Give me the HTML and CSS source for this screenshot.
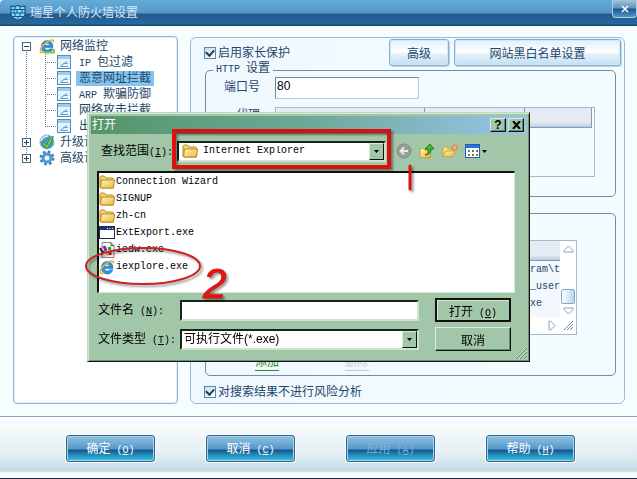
FILE: index.html
```
<!DOCTYPE html>
<html lang="zh-CN">
<head>
  <meta charset="UTF-8">
  <title>瑞星个人防火墙设置</title>
  <link rel="stylesheet" href="styles.css">
</head>
<body>
  <!-- shared icons -->
  <svg class="defs" width="0" height="0">
    <defs>
      <linearGradient id="gold" x1="0" y1="0" x2="1" y2="1">
        <stop offset="0" stop-color="#fff6b8"/>
        <stop offset="1" stop-color="#e8b83c"/>
      </linearGradient>
      <symbol id="folder" viewBox="0 0 16 16">
        <path d="M1 13V3.500q0-1.500 1.500-1.500h3L7 4h6q1.500 0 1.500 1.500V13q0 1-1 1H2q-1 0-1-1z" fill="#f3d56c" stroke="#b98a22"/>
        <path d="M1.500 13.500 2.500 6h13L14.500 14H2z" fill="url(#gold)" stroke="#b98a22" stroke-linejoin="round"/>
      </symbol>
      <symbol id="page" viewBox="0 0 14 14">
        <rect x=".5" y=".5" width="13" height="13" fill="#e4f3fc" stroke="#4f8fc0"/>
        <path d="M1 1h12v3H1z" fill="#a3cdea"/>
        <path d="M3 11.500 10 6.500M4 11.500h7M6 8.500h5" stroke="#6ba3cf" fill="none"/>
      </symbol>
      <symbol id="ie" viewBox="0 0 16 16">
        <path d="M14 9.500H5.500q.3 2.500 2.900 2.500 1.700 0 2.400-1.200h3Q12.500 15 8.300 15 2.300 14.700 2.300 8.700 2.500 2.700 8.300 2.500 14 2.800 14 9.500zM5.500 7.300h5.300Q10.500 5.200 8.200 5.200 5.900 5.200 5.500 7.300z" fill="#2a93dd" stroke="#1569ad" stroke-width=".5"/>
        <path d="M14.500 4.500Q15 0 9 3.500 3 7 1.500 11.500.500 16 5 13.800" fill="none" stroke="#e5b02c" stroke-width="1.500"/>
      </symbol>
      <symbol id="arrow" viewBox="0 0 5 3">
        <path d="M0 0h5L2.500 3z"/>
      </symbol>
    </defs>
  </svg>

  <header class="titlebar">
    <svg class="shield" width="16" height="16" viewBox="0 0 16 16">
      <path d="M1 1q3.500 1.500 7-.5Q11.500 2.500 15 1v9q-1 3-7 5.500Q2 13 1 10z" fill="#7fe0fb" stroke="#143c66"/>
      <path d="M1 4.500h14M1 8h14M2 11.500h12M5 1v3.500M10 1v3.500M7 4.500V8M12 4.500V8M4 4.500V8M5 8v3.500M10 8v3.500M8 11.500V15" stroke="#1a5388" fill="none"/>
    </svg>
    <h1>瑞星个人防火墙设置</h1>
    <button class="close" aria-label="关闭">
      <svg width="8" height="8" viewBox="0 0 8 8"><path d="M1 1l6 6M7 1 1 7" stroke="#fff" stroke-width="1.500"/></svg>
    </button>
  </header>

  <main class="content">
    <nav class="tree">
      <ul class="root">
        <li>
          <div class="node">
            <span class="toggle minus"></span>
            <svg width="16" height="16"><use href="#ie"/><path d="M5 14.500h10V11" stroke="#8cc63f" stroke-width="2" fill="none"/></svg>
            <a href="#">网络监控</a>
          </div>
          <ul class="children">
            <li class="node"><svg width="14" height="14"><use href="#page"/></svg><a href="#"><span class="en">IP </span>包过滤</a></li>
            <li class="node"><svg width="14" height="14"><use href="#page"/></svg><a href="#" class="active">恶意网址拦截</a></li>
            <li class="node"><svg width="14" height="14"><use href="#page"/></svg><a href="#"><span class="en">ARP </span>欺骗防御</a></li>
            <li class="node"><svg width="14" height="14"><use href="#page"/></svg><a href="#">网络攻击拦截</a></li>
            <li class="node"><svg width="14" height="14"><use href="#page"/></svg><a href="#">出站攻击防御</a></li>
          </ul>
        </li>
        <li class="node">
          <span class="toggle plus"></span>
          <svg width="16" height="16" viewBox="0 0 16 16">
            <circle cx="8" cy="8" r="7" fill="#4b9cc9" stroke="#88b7c9"/>
            <path d="M4 7.500 8 11q1-6 6.500-9Q13 8 8.500 14.500L3 10z" fill="#7acb47" stroke="#28793a" stroke-width=".7"/>
            <path d="M2 7q1.500-4.500 7-5" fill="none" stroke="#d4eef5" stroke-width="1.500"/>
          </svg>
          <a href="#">升级设置</a>
        </li>
        <li class="node">
          <span class="toggle plus"></span>
          <svg width="16" height="16" viewBox="0 0 16 16">
            <circle cx="8" cy="8" r="6" fill="none" stroke="#3c82b8" stroke-width="3" stroke-dasharray="2.500 2.210"/>
            <circle cx="8" cy="8" r="4" fill="#e6f4fc" stroke="#4f9ad0" stroke-width="3"/>
          </svg>
          <a href="#">高级设置</a>
        </li>
      </ul>
    </nav>

    <section class="panel">
      <div class="panel-head">
        <label class="check"><input type="checkbox" checked>启用家长保护</label>
        <button class="light">高级</button>
        <button class="light wide">网站黑白名单设置</button>
      </div>

      <fieldset class="http">
        <legend><span class="en">HTTP </span>设置</legend>
        <label for="port">端口号</label>
        <input type="text" id="port" value="80">
        <span class="label">代理</span>
        <div class="list">
          <div class="list-head"><span></span><span></span><span></span></div>
        </div>
      </fieldset>

      <fieldset class="programs">
        <div class="list">
          <div class="rows">
            <div class="list-head"><span></span></div>
            <ul>
              <li class="en">ogram\t</li>
              <li class="en">me_user</li>
              <li class="en">.exe</li>
            </ul>
          </div>
          <div class="scroll">
            <svg width="11" height="8" viewBox="0 0 11 8"><path d="M1 7V5.500L5.500 1 10 5.500V7z" fill="#fff" stroke="#7ea6c4"/></svg>
            <span class="thumb"></span>
            <svg width="11" height="8" viewBox="0 0 11 8"><path d="M1 1v1.500L5.500 7 10 2.500V1z" fill="#fff" stroke="#7ea6c4"/></svg>
          </div>
          <div class="hscroll">
            <svg width="8" height="11" viewBox="0 0 8 11"><path d="M1 1h1.500L7 5.500 2.500 10H1z" fill="#fff" stroke="#7ea6c4"/></svg>
            <svg width="11" height="11" viewBox="0 0 11 11"><path d="M1 10 10 1M4 10l6-6M7 10l3-3" stroke="#5f8fb5"/></svg>
          </div>
        </div>
        <div class="links"><a href="#" class="add">添加</a><a href="#" class="del">删除</a></div>
      </fieldset>

      <label class="check bottom"><input type="checkbox" checked>对搜索结果不进行风险分析</label>
    </section>
  </main>

  <footer class="actions">
    <button>确定<span class="en"> (<u>O</u>)</span></button>
    <button>取消<span class="en"> (<u>C</u>)</span></button>
    <button disabled>应用<span class="en"> (<u>A</u>)</span></button>
    <button>帮助<span class="en"> (<u>H</u>)</span></button>
  </footer>

  <div class="dialog" role="dialog" aria-label="打开">
    <div class="dialog-title">
      <h2>打开</h2>
      <button class="face" aria-label="帮助">?</button>
      <button class="face" aria-label="关闭"><svg width="9" height="8" viewBox="0 0 9 8"><path d="M1 0l7 8M8 0 1 8" stroke="#000" stroke-width="2"/></svg></button>
    </div>

    <div class="lookin">
      <label for="place">查找范围<span class="en">(<u>I</u>):</span></label>
      <div class="combo place">
        <svg class="lead" width="16" height="16"><use href="#folder"/></svg>
        <select id="place" class="en"><option>Internet Explorer</option></select>
        <span class="drop"><svg width="5" height="3"><use href="#arrow"/></svg></span>
      </div>
      <div class="tools">
        <button disabled aria-label="后退">
          <svg width="16" height="16" viewBox="0 0 16 16"><circle cx="8" cy="8" r="7" fill="#9a9f9a" stroke="#7f8a80"/><path d="M12 8H5M8 4.500 4.500 8 8 11.500" stroke="#e8efe8" stroke-width="1.800" fill="none"/></svg>
        </button>
        <button aria-label="向上">
          <svg width="16" height="16" viewBox="0 0 16 16"><path d="M1 14.500V6l4-1 1 2 6 1-1 7z" fill="url(#gold)" stroke="#cf9b34"/><path d="M6 12q4-1 3-6H6l5-5 4 5h-3q0 6-6 6z" fill="#3fb935" stroke="#17691d" stroke-width=".8"/></svg>
        </button>
        <button aria-label="新建文件夹">
          <svg width="16" height="16" viewBox="0 0 16 16"><path d="M1 13.500V4h4l1 2h5v2" fill="#f8df83" stroke="#d6a136"/><path d="M1 13.500 4 8h9l-2.500 5.500z" fill="url(#gold)" stroke="#d6a136"/><path d="M12.500 1v7M9 4.500h7M10 2l5 5M15 2l-5 5" stroke="#ee6a2e"/><circle cx="12.500" cy="4.500" r="1.300" fill="#ffe07a"/></svg>
        </button>
        <button aria-label="查看">
          <svg width="22" height="16" viewBox="0 0 22 16"><rect x=".5" y="1.500" width="14" height="13" fill="#fff" stroke="#1f5fb5"/><path d="M1 2h13v3H1z" fill="#2b73d2"/><path d="M3 8h2M3 12h2" stroke="#6a7896" stroke-width="2"/><path d="M7 8h2M11 12h2" stroke="#2c9a49" stroke-width="2"/><path d="M11 8h2M7 12h2" stroke="#b4574a" stroke-width="2"/><path d="M17 7h5l-2.500 3z"/></svg>
        </button>
      </div>
    </div>

    <ul class="files">
      <li class="en"><svg width="16" height="16"><use href="#folder"/></svg>Connection Wizard</li>
      <li class="en"><svg width="16" height="16"><use href="#folder"/></svg>SIGNUP</li>
      <li class="en"><svg width="16" height="16"><use href="#folder"/></svg>zh-cn</li>
      <li class="en"><svg width="16" height="16" viewBox="0 0 16 16"><rect x=".5" y="1.500" width="15" height="12" fill="#fff" stroke="#222a3c"/><path d="M1 2h14v3H1z" fill="#1d2f86"/><path d="M8 3.500h1M10.500 3.500h1M13 3.500h1" stroke="#fff"/></svg>ExtExport.exe</li>
      <li class="en"><svg width="16" height="16" viewBox="0 0 16 16"><path d="M3 .5h9l3 3v12H3z" fill="#f5f5f5" stroke="#888"/><path d="M12 .5v3h3" fill="none" stroke="#555"/><path d="M1 6l3 5M2 13l3-4" stroke="#222" stroke-width="2"/><path d="M5 4l2 5" stroke="#7a29a8" stroke-width="3"/><path d="M9 7l3-1" stroke="#19a03a" stroke-width="3"/><path d="M11 10v3" stroke="#cf2424" stroke-width="3"/><path d="M7 12l2-2" stroke="#e3c21b" stroke-width="3"/></svg>iedw.exe</li>
      <li class="en"><svg width="16" height="16"><use href="#ie"/></svg>iexplore.exe</li>
    </ul>

    <form class="fields">
      <label for="name">文件名<span class="en"> (<u>N</u>):</span></label>
      <input type="text" id="name" autofocus>
      <button type="button" class="face default">打开<span class="en"> (<u>O</u>)</span></button>
      <label for="type">文件类型<span class="en"> (<u>T</u>):</span></label>
      <div class="combo">
        <select id="type"><option>可执行文件(*.exe)</option></select>
        <span class="drop"><svg width="5" height="3"><use href="#arrow"/></svg></span>
      </div>
      <button type="button" class="face">取消</button>
    </form>
    <svg class="grip" width="12" height="12" viewBox="0 0 12 12"><path d="M1 12 12 1M5 12l7-7M9 12l3-3" stroke="#5f8667"/><path d="M0 12 12 0M4 12l8-8M8 12l4-4" stroke="#dcefdc" stroke-width=".7"/></svg>

    <!-- red marker notes over the dialog -->
    <svg class="marks" width="443" height="250" viewBox="0 0 443 250">
      <rect x="87" y="19" width="215" height="36" fill="none" stroke="#dc1010" stroke-width="4"/>
      <path d="M323 54v23" stroke="#dc1010" stroke-width="3" stroke-linecap="round"/>
      <ellipse cx="56" cy="154" rx="57" ry="18" fill="none" stroke="#cc2222" stroke-width="2"/>
      <text x="116" y="186">2</text>
    </svg>
  </div>
</body>
</html>
```
FILE: styles.css
```
* {
  box-sizing: border-box;
}

body {
  font-family: "Liberation Sans", "Noto Sans CJK SC", sans-serif;
  font-size: 12px;
  line-height: 16px;
  color: #1d4768;
  background-color: #f5fdff;
  margin: 0;
  min-height: 100vh;
  display: flex;
  flex-direction: column;
  position: relative;
  border-bottom: 1px solid #1b2f48;
}

h1, h2 {
  font-size: 12px;
  font-weight: normal;
  margin: 0;
}

ul {
  list-style: none;
  margin: 0;
  padding: 0;
}

a {
  color: inherit;
  text-decoration: none;
}

button, input, select {
  font-family: inherit;
  font-size: 12px;
  color: inherit;
  margin: 0;
  padding: 0;
}

svg {
  flex: none;
  display: block;
}

.defs {
  position: absolute;
}

/* narrow latin text, half the width of a Chinese character */
.en {
  font-family: "Liberation Mono", "Noto Sans CJK SC", monospace;
  font-size: 10px;
  line-height: 1;
  white-space: pre;
}

/* title bar */
.titlebar {
  display: flex;
  align-items: center;
  gap: 4px;
  height: 26px;
  padding-left: 10px;
  background: linear-gradient(#66aad6, #5598cb 13px, #26588f 14px, #26699c 24px, #17496f 25px);
  border-top-left-radius: 4px;
}

.titlebar h1 {
  flex: 1;
  color: #d3ebfa;
}

.close {
  display: flex;
  align-items: center;
  justify-content: center;
  align-self: flex-start;
  width: 25px;
  height: 18px;
  border: 1px solid #a8d3ee;
  border-top: 0;
  border-radius: 0 0 4px 4px;
  background: linear-gradient(#a5c4dc, #5f93bf 8px, #1f568d 9px, #4f96c7);
}

/* main area */
.content {
  flex: 1;
  display: flex;
  gap: 12px;
  padding: 10px 12px 12px 13px;
}

.tree {
  width: 165px;
  border: 1px solid #8fb4d3;
  border-radius: 4px;
  box-shadow: inset 0 0 0 1px #e3f0fa;
  background-color: #fff;
  padding: 1px 8px;
}

.root {
  background: repeating-linear-gradient(#5f8199 0 1px, transparent 1px 2px) 4px 12px / 1px 104px no-repeat;
}

.node {
  display: flex;
  align-items: center;
  height: 16px;
  white-space: nowrap;
}

.node a {
  padding: 0 3px;
  margin-left: 2px;
  line-height: 15px;
}

.node .active {
  background-color: #85c3ee;
}

.toggle {
  width: 9px;
  height: 9px;
  margin-right: 8px;
  border: 1px solid #45677f;
  background: linear-gradient(#1d4768, #1d4768) center / 5px 1px no-repeat #fff;
}

.plus {
  background: linear-gradient(#1d4768, #1d4768) center / 5px 1px no-repeat, linear-gradient(#1d4768, #1d4768) center / 1px 5px no-repeat #fff;
}

.children {
  margin-left: 23px;
  background: repeating-linear-gradient(#5f8199 0 1px, transparent 1px 2px) 0 0 / 1px 73px no-repeat;
}

.children .node::before {
  content: "";
  width: 12px;
  height: 1px;
  background: repeating-linear-gradient(90deg, #5f8199 0 1px, transparent 1px 2px);
}

.children .node a {
  margin-left: 5px;
}

.panel {
  flex: 1;
  min-width: 0;
  margin-top: 1px;
  border: 1px solid #9bb9d3;
  border-radius: 6px;
  background: linear-gradient(90deg, #f0f8ff, #f5fcff);
  padding: 2px 3px 2px 0;
}

.panel-head {
  display: flex;
  align-items: center;
  gap: 5px;
  height: 25px;
  padding-left: 13px;
}

.check {
  display: flex;
  align-items: center;
  gap: 2px;
  margin-right: auto;
}

.check input {
  appearance: none;
  width: 12px;
  height: 12px;
  border: 1px solid #5b87a8;
  background: linear-gradient(135deg, #c9dcea, #fff);
  display: flex;
}

.check input:checked::before {
  content: "";
  width: 8px;
  height: 4px;
  margin: 1px;
  border: solid #163e5e;
  border-width: 0 0 2px 2px;
  transform: rotate(-48deg);
}

.light {
  width: 60px;
  height: 27px;
  border: 1px solid #7eafd2;
  border-radius: 3px;
  box-shadow: inset 0 0 0 1px #d3e8f7, 1px 1px 1px #b9d4e8;
  background: linear-gradient(#dff0fb, #fff 12px, #e3f1fb 14px, #c5def1);
}

.light.wide {
  width: 167px;
}

fieldset {
  min-width: 0;
  margin: 0 5px 0 14px;
  border: 1px solid #6c8fae;
  border-radius: 5px;
}

legend {
  line-height: 6px;
  padding: 0 3px;
}

.http {
  display: grid;
  grid-template-columns: 54px 1fr;
  gap: 8px 15px;
  padding: 2px 20px 19px 0;
}

.http legend {
  margin-left: 7px;
}

.http label, .http .label {
  text-align: right;
  line-height: 20px;
}

.http .label {
  line-height: 16px;
}

.http input {
  width: 144px;
  height: 22px;
  padding: 0 1px 4px;
  border: 1px solid #b7cddd;
  border-top-color: #6f8ca5;
  border-left-color: #6f8ca5;
  background-color: #fff;
  color: #000;
}

.list {
  border: 1px solid #9dbbd3;
}

.http .list {
  height: 70px;
  padding-right: 2px;
}

.list-head {
  display: flex;
  height: 20px;
  background: linear-gradient(#e6ebf3 14px, #bccbe0);
  border-bottom: 1px solid #7e9dbb;
}

.list-head span {
  flex: 4;
  border-right: 1px solid #7e9dbb;
}

.list-head span:first-child {
  flex: 9;
}

.list-head span:nth-child(2) {
  flex: 6;
}

.programs {
  margin-top: 16px;
  padding: 26px 38px 4px 10px;
}

.programs .list {
  display: grid;
  grid-template-columns: 1fr 16px;
  grid-template-rows: 1fr 17px;
  height: 95px;
  background-color: #fff;
}

.rows {
  background-color: #f2f8fd;
}

.rows .list-head span {
  border-right: 0;
}

.rows li {
  line-height: 17px;
  width: 42px;
  margin-left: auto;
}

.scroll {
  display: flex;
  flex-direction: column;
  align-items: center;
  padding: 4px 0 2px;
}

.thumb {
  width: 14px;
  height: 15px;
  margin: auto 0 3px;
  border: 1px solid #7fa9cb;
  border-radius: 2px;
  background: linear-gradient(90deg, #fff, #b9d5ec);
}

.hscroll {
  grid-column: 1 / 3;
  display: flex;
  align-items: center;
  justify-content: flex-end;
  gap: 7px;
  padding-right: 2px;
}

.links {
  display: flex;
  gap: 66px;
  padding: 19px 0 0 39px;
}

.links a {
  border-bottom: 1px solid;
}

.add {
  color: #2f8a1c;
}

.del {
  color: #c3cbd1;
}

.bottom {
  margin: 8px 0 0 13px;
}

/* bottom buttons */
.actions {
  display: flex;
  justify-content: space-between;
  height: 62px;
  padding: 18px 62px 0 66px;
  border-top: 1px solid #84a8c9;
  background: linear-gradient(#fcfeff, #e5eff4 35px, #c3dae7 54px, #f5fdff 56px);
}

.actions button {
  width: 89px;
  height: 27px;
  padding-bottom: 2px;
  border: 1px solid #2c6591;
  border-radius: 3px;
  box-shadow: inset 0 0 0 1px #a5d6ed, 0 0 0 1px #fff;
  background: linear-gradient(#94c2e2, #5298c9 13px, #17538c 14px, #2182b2 18px, #38c4df);
  color: #fff;
}

.actions button:disabled {
  color: #7eb1d6;
}

/* open file dialog */
.dialog {
  position: absolute;
  top: 112px;
  left: 87px;
  width: 443px;
  height: 250px;
  padding: 3px;
  border: 1px solid #111;
  border-top-color: #bddabf;
  border-left-color: #bddabf;
  box-shadow: inset 1px 1px #d5e8d5, inset -1px -1px #6d9174;
  background-color: #a2c7a8;
  color: #000;
}

.dialog-title {
  display: flex;
  align-items: center;
  gap: 2px;
  height: 18px;
  padding: 0 2px 0 1px;
  background: linear-gradient(90deg, #56956a, #6ea898 50%, #98c5e9);
}

.dialog-title h2 {
  flex: 1;
  color: #fff;
}

.face {
  border: 1px solid #111;
  border-top-color: #d9ecd9;
  border-left-color: #d9ecd9;
  box-shadow: inset -1px -1px #668b6d;
  background-color: #a2c7a8;
}

.dialog-title .face {
  display: flex;
  align-items: center;
  justify-content: center;
  width: 16px;
  height: 14px;
  font-weight: bold;
}

.lookin {
  display: flex;
  align-items: center;
  height: 34px;
  padding-left: 10px;
}

.lookin label {
  width: 76px;
  white-space: nowrap;
}

.combo {
  position: relative;
  display: flex;
}

.place {
  width: 209px;
}

.lead {
  position: absolute;
  left: 5px;
  top: 2px;
}

.combo select, .fields input {
  appearance: none;
  width: 100%;
  height: 21px;
  padding: 0 20px 0 2px;
  border: 2px solid #cfe4cf;
  border-top-color: #18251a;
  border-left-color: #18251a;
  border-radius: 0;
  background-color: #fff;
  color: #000;
  outline: 0;
}

.combo .en {
  padding-left: 24px;
  font-size: 10px;
}

.drop {
  position: absolute;
  right: 2px;
  top: 2px;
  width: 15px;
  height: 17px;
  display: flex;
  align-items: center;
  justify-content: center;
  border: 1px solid #111;
  border-top-color: #d9ecd9;
  border-left-color: #d9ecd9;
  background-color: #a2c7a8;
  pointer-events: none;
}

.tools {
  display: flex;
  align-items: center;
  gap: 7px;
  margin-left: 10px;
}

.tools button {
  display: flex;
  border: 0;
  background: none;
}

.files {
  height: 122px;
  margin: 3px 11px 0 6px;
  border: 1px solid #d5e8d5;
  border-top: 2px solid #111;
  border-left: 2px solid #111;
  background-color: #fff;
}

.files li {
  display: flex;
  align-items: center;
  gap: 1px;
  height: 17px;
}

.fields {
  display: grid;
  grid-template-columns: 82px 239px 76px;
  align-items: center;
  row-gap: 5px;
  padding: 5px 0 0 7px;
}

.fields .face {
  height: 24px;
  margin-left: 16px;
  width: 76px;
}

.fields .default {
  border: 2px solid #111;
  box-shadow: inset 1px 1px #d9ecd9;
}

.grip {
  position: absolute;
  right: 2px;
  bottom: 2px;
}

.marks {
  position: absolute;
  left: -1px;
  top: -1px;
  overflow: visible;
  pointer-events: none;
  filter: drop-shadow(2px 2px 1px rgba(0,0,0,0.4));
}

.marks text {
  font: italic 42px "Liberation Sans", sans-serif;
  fill: #e01515;
  stroke: #e01515;
}
```
